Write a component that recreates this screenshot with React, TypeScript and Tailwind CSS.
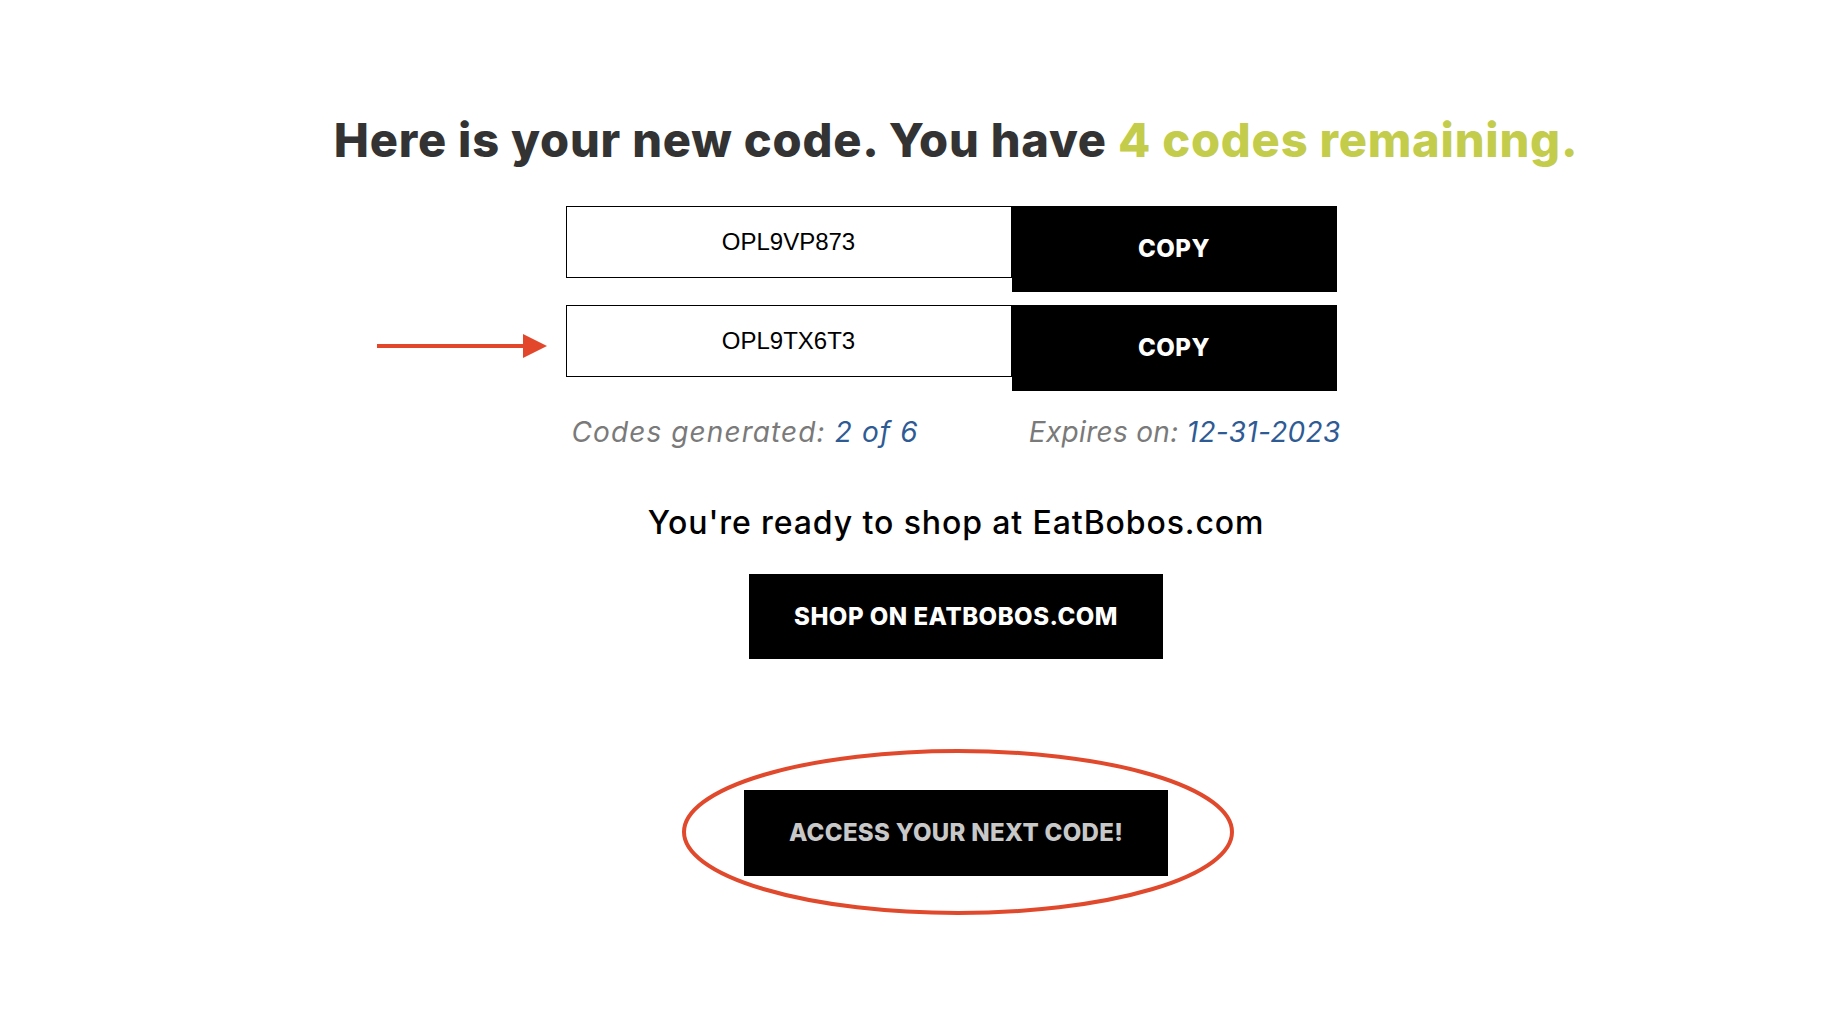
import React from "react";

const poppins = { fontFamily: "Inter, 'Noto Sans', sans-serif" };

function CodeRow({ code, arrow }: { code: string; arrow?: boolean }) {
  return (
    <div className="relative flex items-start">
      {arrow && (
        <svg
          className="absolute left-[-189px] top-[28px]"
          width="172"
          height="26"
          viewBox="0 0 172 26"
        >
          <line x1="0" y1="13" x2="150" y2="13" stroke="#e3472b" strokeWidth="4" />
          <polygon points="146,1 170,13 146,25" fill="#e3472b" />
        </svg>
      )}
      <div
        className="flex h-[72px] w-[446px] items-center justify-center border border-black bg-white text-[24px] text-black"
        style={{ fontFamily: "'Liberation Sans', Arial, sans-serif" }}
      >
        {code}
      </div>
      <button className="flex h-[86px] w-[325px] items-center justify-center bg-black text-[24px] font-extrabold tracking-[0.5px] text-white" style={poppins}>
        COPY
      </button>
    </div>
  );
}

export default function App() {
  return (
    <div className="min-h-[1022px] w-full bg-white" style={poppins}>
      <div className="flex flex-col items-center pl-[66px] pt-[112px]">
        <h1 className="text-[47px] leading-[56px] font-extrabold tracking-[0.8px] text-[#333333]">
          Here is your new code. You have <span className="text-[#c3cc4b]">4 codes remaining.</span>
        </h1>
        <div className="mr-[10px] mt-[38px] flex flex-col gap-[13px]">
          <CodeRow code="OPL9VP873" />
          <CodeRow code="OPL9TX6T3" arrow />
        </div>
        <div className="mr-[6px] mt-[23px] flex w-[775px] justify-between pl-[6px] text-[28px] italic leading-[36px]">
          <div className="tracking-[1.1px]">
            <span className="text-[#7a7a7a]">Codes generated: </span>
            <span className="text-[#2f5b95]">2 of 6</span>
          </div>
          <div className="tracking-[0.3px]">
            <span className="text-[#7a7a7a]">Expires on: </span>
            <span className="text-[#2f5b95]">12-31-2023</span>
          </div>
        </div>
        <p className="mt-[53px] text-[32px] leading-[40px] font-medium tracking-[0.9px] text-black">
          You're ready to shop at EatBobos.com
        </p>
        <button className="mt-[31px] flex h-[85px] w-[414px] items-center justify-center bg-black text-[24px] font-extrabold tracking-[0.5px] text-white">
          SHOP ON EATBOBOS.COM
        </button>
        <div className="relative mt-[131px]">
          <svg
            className="pointer-events-none absolute left-[-64px] top-[-42px]"
            width="556"
            height="172"
            viewBox="0 0 556 172"
          >
            <ellipse cx="278" cy="84" rx="274" ry="81" fill="none" stroke="#e0492c" strokeWidth="4" />
          </svg>
          <button className="relative flex h-[86px] w-[424px] items-center justify-center bg-black text-[24px] font-extrabold tracking-[0.3px] text-[#c8c8c8]">
            ACCESS YOUR NEXT CODE!
          </button>
        </div>
      </div>
    </div>
  );
}
